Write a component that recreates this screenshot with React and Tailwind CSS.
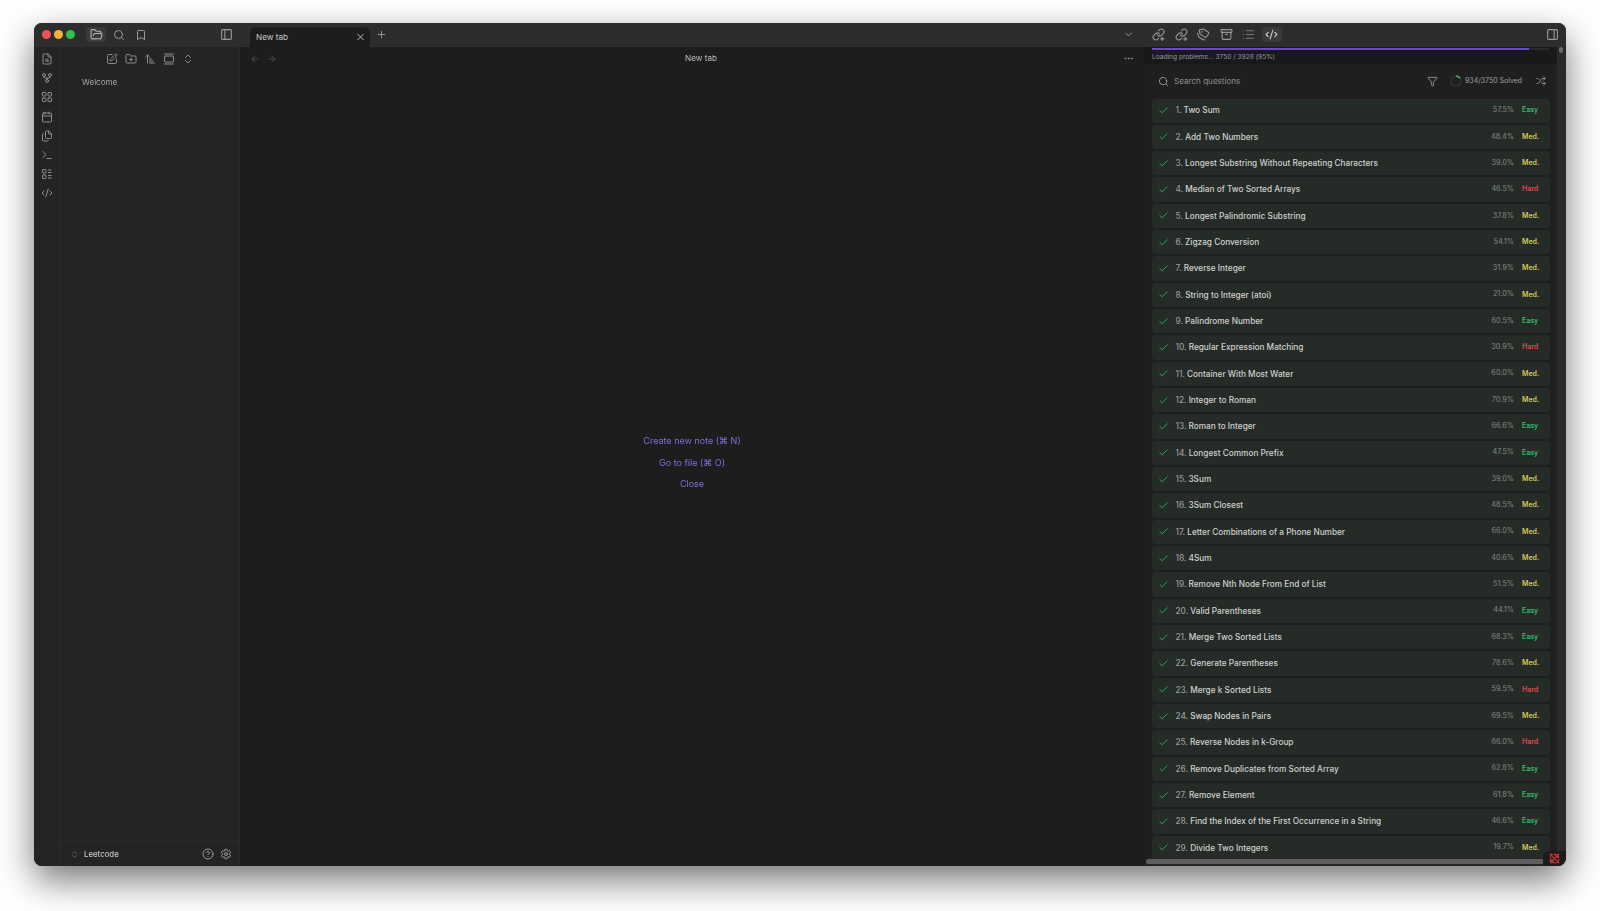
import React from 'react';
import {
    Archive, ArrowUpNarrowWide, Bookmark, Calendar, Check, ChevronDown, ChevronsUpDown, CircleHelp,
    CodeXml, Ellipsis, FileSearch, Files, FolderOpen, FolderPlus, Funnel, GalleryVertical, GitFork,
    LayoutGrid, List, PanelLeft, PanelRight, Plus, Search, Settings, Shuffle,
    SquarePen, Tags, Terminal, X, ArrowLeft, ArrowRight,
} from 'lucide-react';

const problems = [
    ['1. ', 'Two Sum', '57.5%', 'Easy'],
    ['2. ', 'Add Two Numbers', '48.4%', 'Med.'],
    ['3. ', 'Longest Substring Without Repeating Characters', '39.0%', 'Med.'],
    ['4. ', 'Median of Two Sorted Arrays', '46.5%', 'Hard'],
    ['5. ', 'Longest Palindromic Substring', '37.8%', 'Med.'],
    ['6. ', 'Zigzag Conversion', '54.1%', 'Med.'],
    ['7. ', 'Reverse Integer', '31.9%', 'Med.'],
    ['8. ', 'String to Integer (atoi)', '21.0%', 'Med.'],
    ['9. ', 'Palindrome Number', '60.5%', 'Easy'],
    ['10. ', 'Regular Expression Matching', '30.9%', 'Hard'],
    ['11. ', 'Container With Most Water', '60.0%', 'Med.'],
    ['12. ', 'Integer to Roman', '70.9%', 'Med.'],
    ['13. ', 'Roman to Integer', '66.6%', 'Easy'],
    ['14. ', 'Longest Common Prefix', '47.5%', 'Easy'],
    ['15. ', '3Sum', '39.0%', 'Med.'],
    ['16. ', '3Sum Closest', '48.5%', 'Med.'],
    ['17. ', 'Letter Combinations of a Phone Number', '66.0%', 'Med.'],
    ['18. ', '4Sum', '40.6%', 'Med.'],
    ['19. ', 'Remove Nth Node From End of List', '51.5%', 'Med.'],
    ['20. ', 'Valid Parentheses', '44.1%', 'Easy'],
    ['21. ', 'Merge Two Sorted Lists', '68.3%', 'Easy'],
    ['22. ', 'Generate Parentheses', '78.6%', 'Med.'],
    ['23. ', 'Merge k Sorted Lists', '59.5%', 'Hard'],
    ['24. ', 'Swap Nodes in Pairs', '69.5%', 'Med.'],
    ['25. ', 'Reverse Nodes in k-Group', '66.0%', 'Hard'],
    ['26. ', 'Remove Duplicates from Sorted Array', '62.8%', 'Easy'],
    ['27. ', 'Remove Element', '61.8%', 'Easy'],
    ['28. ', 'Find the Index of the First Occurrence in a String', '46.6%', 'Easy'],
    ['29. ', 'Divide Two Integers', '19.7%', 'Med.'],
];

const levelColor = {
    Easy: 'text-[#34b868]',
    'Med.': 'text-[#d3c85c]',
    Hard: 'text-[#e0474c]',
};

// link with a small plus, the two outgoing / backlink tabs
const LinkPlus = () => (
    <svg width="13" height="13" viewBox="0 0 24 24" fill="none" stroke="currentColor" strokeWidth="2" strokeLinecap="round">
        <path d="M10 13a5 5 0 0 0 7.54.54l3-3a5 5 0 0 0-7.07-7.07l-1.72 1.71" />
        <path d="M14 11a5 5 0 0 0-7.54-.54l-3 3a5 5 0 0 0 7.07 7.07l1.71-1.71" />
        <path d="M19 17v6M16 20h6" />
    </svg>
);

const TaskGrid = ({ size }) => (
    <svg width={size} height={size} viewBox="0 0 24 24" fill="none" stroke="currentColor" strokeWidth="2">
        <rect x="3" y="3" width="7" height="7" rx="1" />
        <rect x="3" y="14" width="7" height="7" rx="1" />
        <path d="M14 4h7M14 9h7M14 15h7M14 20h7" />
    </svg>
);

const railIcons = [FileSearch, GitFork, LayoutGrid, Calendar, Files, Terminal, TaskGrid, CodeXml];

const BrokenBox = () => (
    <svg width="11" height="11" viewBox="0 0 24 24" fill="none" stroke="#d8343a" strokeWidth="2.4">
        <path d="M3 3h18v18H3z" strokeDasharray="5 2" />
        <path d="M3 3l18 18M21 3L3 21M3 13l8 8M13 3l8 8" />
    </svg>
);

const App = () => {
    return (
        <div className="h-[911px] w-[1600px] overflow-hidden bg-white pl-[34px] pt-[23px] font-['Inter','Liberation_Sans',sans-serif]">
            <div className="flex h-[843px] w-[1532px] flex-col overflow-hidden rounded-[8px] bg-[#1d1d1d] shadow-[0_14px_36px_rgba(0,0,0,0.55)] blur-[0.3px]">
                {/* title bar */}
                <div className="flex h-[24px] shrink-0 items-center bg-[#2d2d2d] pb-[1px] text-[#9a9a9a]">
                    <div className="flex w-[206px] shrink-0 items-center">
                        <div className="ml-[8px] flex gap-[3px]">
                            <span className="h-[9px] w-[9px] rounded-full bg-[#f2524f]" />
                            <span className="h-[9px] w-[9px] rounded-full bg-[#f6b13b]" />
                            <span className="h-[9px] w-[9px] rounded-full bg-[#30c148]" />
                        </div>
                        <div className="ml-[11px] flex h-[15px] w-[20px] items-center justify-center rounded-[3px] bg-[#3a3a3a] text-[#b5b5b5]">
                            <FolderOpen size={13} />
                        </div>
                        <Search size={12} className="ml-[7px]" />
                        <Bookmark size={12} className="ml-[10px]" />
                        <PanelLeft size={13} className="ml-auto mr-[7px]" />
                    </div>
                    <div className="ml-[10px] flex h-[20px] w-[120px] shrink-0 translate-y-[2.5px] items-center justify-between rounded-t-[5px] bg-[#1d1d1d] px-[5px] pl-[6px] pr-[4px] text-[#c8c8c8]">
                        <span className="text-[8.2px]">New tab</span>
                        <X size={11} />
                    </div>
                    <Plus size={11} className="ml-[6px]" />
                    <ChevronDown size={11} className="ml-[736px]" />
                    <div className="ml-[18px] flex items-center gap-[9.5px]">
                        <LinkPlus />
                        <LinkPlus />
                        <Tags size={13} className="-rotate-12" />
                        <Archive size={13} />
                        <List size={13} className="text-[#7a7a7a]" />
                        <div className="-ml-[3px] flex h-[15px] w-[20px] items-center justify-center rounded-[3px] bg-[#3a3a3a] text-[#cfcfcf]">
                            <CodeXml size={13} />
                        </div>
                    </div>
                    <PanelRight size={13} className="ml-auto mr-[7px]" />
                </div>

                <div className="flex min-h-0 flex-1">
                    {/* icon rail */}
                    <div className="flex w-[26px] shrink-0 flex-col items-center gap-[7.2px] border-r border-[#2a2a2a] bg-[#242424] pt-[6px] text-[#8c8c8c]">
                        {railIcons.map((Icon, i) => (
                            <Icon key={i} size={12} />
                        ))}
                    </div>

                    {/* file sidebar */}
                    <div className="flex w-[180px] shrink-0 flex-col border-r border-[#2a2a2a] bg-[#242424]">
                        <div className="flex h-[24px] items-center justify-center gap-[7px] text-[#8c8c8c]">
                            <SquarePen size={12} />
                            <FolderPlus size={12} />
                            <ArrowUpNarrowWide size={12} />
                            <GalleryVertical size={12} />
                            <ChevronsUpDown size={12} />
                        </div>
                        <div className="pl-[22px] pt-[4px] text-[8px] leading-[14px] text-[#a8a8a8]">Welcome</div>
                        <div className="mt-auto flex h-[25px] items-center border-t border-[#2a2a2a] pl-[10px] pr-[7px] text-[#9a9a9a]">
                            <ChevronsUpDown size={9} className="text-[#777777]" />
                            <span className="ml-[5px] translate-y-[0.5px] text-[7.8px] font-medium text-[#c4c4c4]">Leetcode</span>
                            <CircleHelp size={12} className="ml-auto" />
                            <Settings size={12} className="ml-[6px]" />
                        </div>
                    </div>

                    {/* empty tab */}
                    <div className="flex w-[904px] shrink-0 flex-col bg-[#1d1d1d]">
                        <div className="flex h-[23px] items-center pl-[10px] pr-[10px] text-[#4f4f4f]">
                            <ArrowLeft size={10} />
                            <ArrowRight size={10} className="ml-[7px]" />
                            <span className="ml-[408px] text-[8.2px] text-[#bdbdbd]">New tab</span>
                            <Ellipsis size={11} className="ml-auto text-[#9a9a9a]" />
                        </div>
                        <div className="flex flex-1 -translate-y-[5px] flex-col items-center justify-center gap-[7px] text-[9px] leading-[14.5px] text-[#866cdc]">
                            <span>Create new note (⌘ N)</span>
                            <span>Go to file (⌘ O)</span>
                            <span>Close</span>
                        </div>
                    </div>

                    {/* leetcode panel */}
                    <div className="relative flex min-w-0 flex-1 bg-[#2a2a2a]">
                        <div className="flex w-[413px] shrink-0 flex-col bg-[#1f1f1f]">
                            <div className="flex h-[17px] shrink-0 flex-col bg-[#191919] px-[8px] pt-[1px]">
                                <div className="h-[2px] w-full bg-[#2a2a2a]">
                                    <div className="h-full w-[95%] bg-[#6a46d4]" />
                                </div>
                                <span className="mt-[1px] text-[6.6px] leading-[12px] text-[#9a9a9a]">Loading problems... 3750 / 3928 (95%)</span>
                            </div>
                            <div className="flex h-[34.5px] shrink-0 items-center pl-[14px] pr-[11px] text-[#9a9a9a]">
                                <Search size={11} />
                                <span className="ml-[5px] text-[8.1px] text-[#8f8f8f]">Search questions</span>
                                <Funnel size={11} className="ml-auto" />
                                <svg width="14" height="14" viewBox="0 0 14 14" className="ml-[11px]">
                                    <circle cx="7" cy="7" r="5" fill="none" stroke="#333333" strokeWidth="1.6" />
                                    <path d="M7 2a5 5 0 0 1 4 2.2" fill="none" stroke="#2fbf68" strokeWidth="1.6" />
                                </svg>
                                <span className="ml-[2px] w-[58px] whitespace-nowrap text-[7px] text-[#9f9f9f]">934/3750 Solved</span>
                                <Shuffle size={10} className="ml-[13px]" />
                            </div>
                            <div className="flex flex-col gap-[2px] overflow-hidden pl-[8px] pr-[7px]">
                                {problems.map((p) => (
                                    <div key={p[0]} className="flex h-[24.33px] shrink-0 items-center rounded-[4px] bg-[#252c28] pl-[6px] pr-[11px]">
                                        <Check size={11} className="text-[#2fa85c]" />
                                        <span className="ml-[6.5px] text-[8.25px] font-medium text-[#d0d0d0]">
                                            <span className="text-[#9a9a9a]">{p[0]}</span>{p[1]}
                                        </span>
                                        <span className="ml-auto text-[7.3px] text-[#868686]">{p[2]}</span>
                                        <span className={`ml-[8px] w-[17px] text-[7px] font-semibold ${levelColor[p[3]]}`}>{p[3]}</span>
                                    </div>
                                ))}
                            </div>
                        </div>
                        {/* scrollbars */}
                        <div className="absolute right-[3px] top-[0px] h-[6px] w-[4px] rounded-full bg-[#6a6a6a]" />
                        <div className="absolute bottom-0 left-[2px] right-0 h-[8px] bg-[#252525] pt-[1px]">
                            <div className="h-[5px] w-[398px] rounded-full bg-[#5e5e5e]" />
                        </div>
                        <div className="absolute bottom-0 right-0 flex h-[15px] w-[23px] items-center justify-center rounded-tl-[5px] bg-[#1c1c1c]">
                            <BrokenBox />
                        </div>
                    </div>
                </div>
            </div>
        </div>
    );
};

export default App;
